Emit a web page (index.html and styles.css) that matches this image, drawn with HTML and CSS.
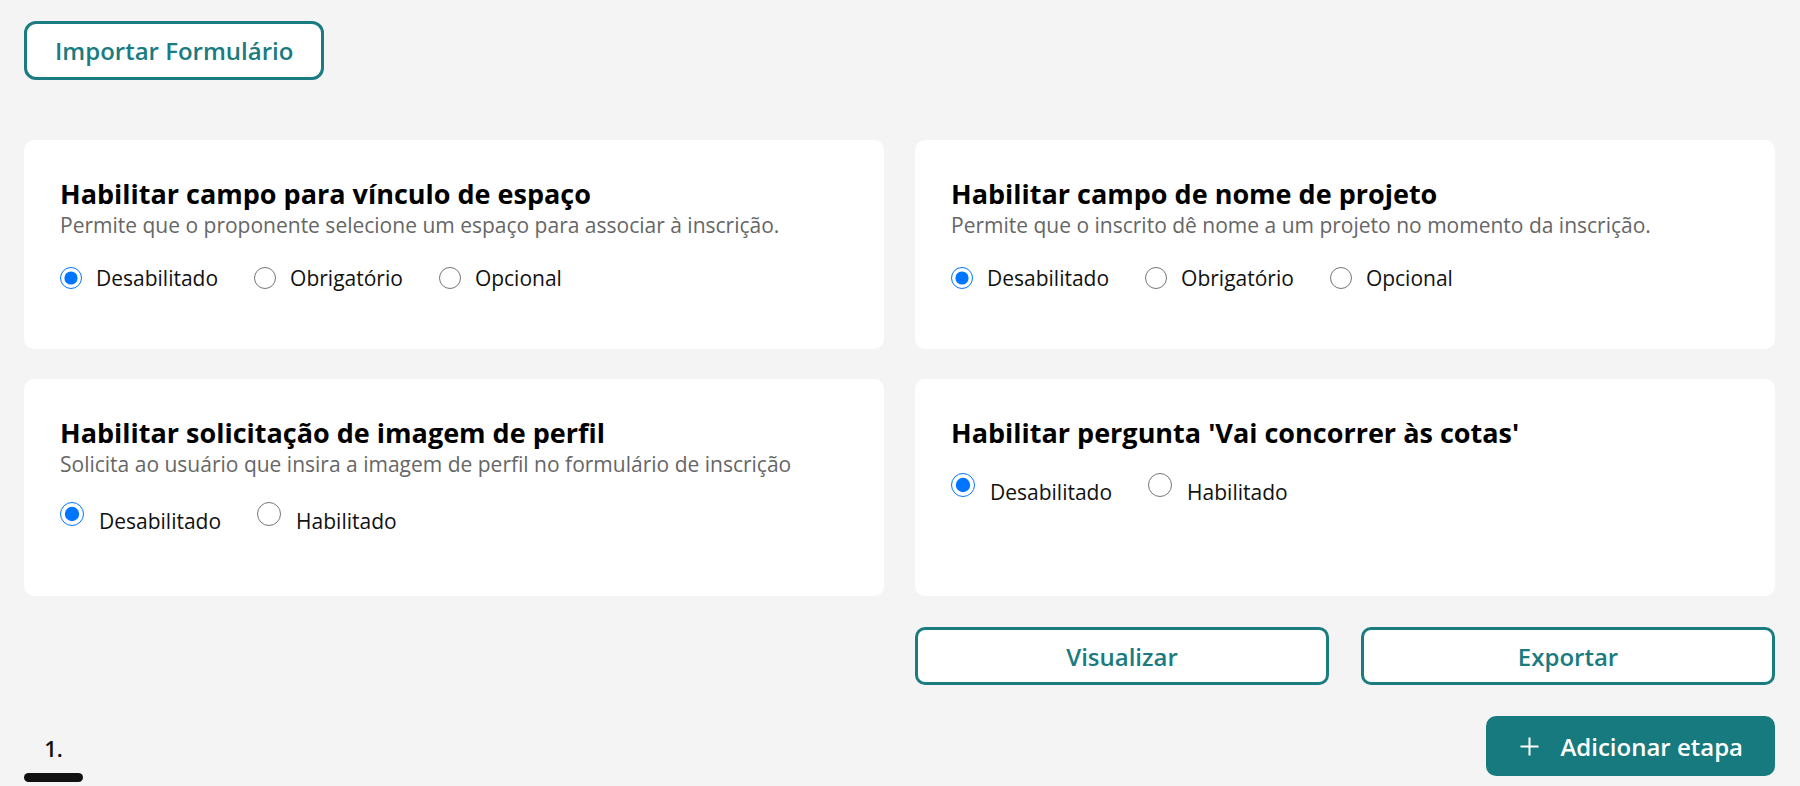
FILE: index.html
```html
<!DOCTYPE html>
<html lang="pt-BR">
<head>
<meta charset="utf-8">
<title>Formulário</title>
<link rel="stylesheet" href="styles.css">
</head>
<body>
<main class="page">
  <div class="toolbar">
    <button class="btn btn-outline btn-import" type="button">Importar Formulário</button>
  </div>

  <section class="grid">
    <div class="card">
      <h3 class="card-title">Habilitar campo para vínculo de espaço</h3>
      <p class="card-desc">Permite que o proponente selecione um espaço para associar à inscrição.</p>
      <div class="options">
        <label class="option"><input class="radio" type="radio" name="espaco" checked><span>Desabilitado</span></label>
        <label class="option"><input class="radio" type="radio" name="espaco"><span>Obrigatório</span></label>
        <label class="option"><input class="radio" type="radio" name="espaco"><span>Opcional</span></label>
      </div>
    </div>

    <div class="card">
      <h3 class="card-title">Habilitar campo de nome de projeto</h3>
      <p class="card-desc">Permite que o inscrito dê nome a um projeto no momento da inscrição.</p>
      <div class="options">
        <label class="option"><input class="radio" type="radio" name="projeto" checked><span>Desabilitado</span></label>
        <label class="option"><input class="radio" type="radio" name="projeto"><span>Obrigatório</span></label>
        <label class="option"><input class="radio" type="radio" name="projeto"><span>Opcional</span></label>
      </div>
    </div>

    <div class="card">
      <h3 class="card-title">Habilitar solicitação de imagem de perfil</h3>
      <p class="card-desc">Solicita ao usuário que insira a imagem de perfil no formulário de inscrição</p>
      <div class="options options-lg">
        <label class="option"><input class="radio" type="radio" name="perfil" checked><span>Desabilitado</span></label>
        <label class="option"><input class="radio" type="radio" name="perfil"><span>Habilitado</span></label>
      </div>
    </div>

    <div class="card">
      <h3 class="card-title">Habilitar pergunta 'Vai concorrer às cotas'</h3>
      <div class="options options-lg options-tight">
        <label class="option"><input class="radio" type="radio" name="cotas" checked><span>Desabilitado</span></label>
        <label class="option"><input class="radio" type="radio" name="cotas"><span>Habilitado</span></label>
      </div>
    </div>
  </section>

  <div class="actions">
    <div></div>
    <div class="actions-buttons">
      <button class="btn btn-outline btn-wide" type="button">Visualizar</button>
      <button class="btn btn-outline btn-wide" type="button">Exportar</button>
    </div>
  </div>

  <div class="footer">
    <div class="tab">
      <span class="tab-label">1.</span>
      <span class="tab-bar"></span>
    </div>
    <button class="btn btn-primary" type="button">
      <svg class="plus" width="19" height="19" viewBox="0 0 19 19" aria-hidden="true"><path d="M9.5 0.5v18M0.5 9.5h18" stroke="#fff" stroke-width="2" fill="none"/></svg>
      <span>Adicionar etapa</span>
    </button>
  </div>
</main>
</body>
</html>
```

FILE: styles.css
```css
* { box-sizing: border-box; }

html, body {
  margin: 0;
  padding: 0;
  background: #f4f4f4;
  font-family: "Open Sans", "Noto Sans", sans-serif;
  color: #111;
}

.page {
  padding: 21px 25px 0 24px;
  height: 786px;
  overflow: hidden;
}

.toolbar {
  display: flex;
}

.btn {
  font-family: "Open Sans", "Noto Sans", sans-serif;
  font-weight: 600;
  font-size: 24px;
  cursor: pointer;
  display: inline-flex;
  align-items: center;
  justify-content: center;
}

.btn-outline {
  background: #fff;
  color: #1a7b80;
  border: 3px solid #1a7b80;
  border-radius: 12px;
}

.btn-import {
  height: 59px;
  padding: 0 28px;
}

.grid {
  margin-top: 60px;
  display: grid;
  grid-template-columns: 1fr 1fr;
  column-gap: 31px;
  row-gap: 30px;
}

.card {
  background: #fff;
  border-radius: 10px;
  padding: 36px 36px 56px;
}

.card-title {
  margin: 0;
  font-size: 27px;
  font-weight: 700;
  line-height: 36px;
  color: #000;
}

.card-desc {
  margin: 0;
  font-size: 21px;
  line-height: 27px;
  color: #666;
}

.options {
  display: flex;
  align-items: center;
  gap: 36px;
  margin-top: 24px;
  height: 30px;
}

.option {
  display: flex;
  align-items: center;
  gap: 14px;
  font-size: 21px;
  line-height: 27px;
  color: #111;
  cursor: pointer;
}

.radio {
  width: 22px;
  height: 22px;
  margin: 0;
  accent-color: #0075ff;
  flex: none;
}

.options-lg {
  height: 38px;
  gap: 36px;
}

.options-lg .option {
  gap: 15px;
}

.options-lg .radio {
  width: 24px;
  height: 24px;
  margin-bottom: 14px;
}

.options-tight {
  margin-top: 22px;
}

.actions {
  margin-top: 31px;
  display: grid;
  grid-template-columns: 1fr 1fr;
  column-gap: 31px;
}

.actions-buttons {
  display: flex;
  gap: 32px;
}

.btn-wide {
  flex: 1;
  height: 58px;
  border-radius: 10px;
}

.footer {
  margin-top: 31px;
  display: flex;
  justify-content: space-between;
  align-items: flex-start;
}

.tab {
  display: flex;
  flex-direction: column;
  align-items: center;
  width: 59px;
  padding-top: 17px;
}

.tab-label {
  font-size: 22px;
  font-weight: 600;
  line-height: 30px;
  color: #111;
}

.tab-bar {
  margin-top: 10px;
  width: 59px;
  height: 9px;
  border-radius: 5px;
  background: #111;
}

.btn-primary {
  height: 60px;
  padding: 0 32px 0 34px;
  gap: 21px;
  background: #167a7f;
  color: #fff;
  border: none;
  border-radius: 10px;
}

.plus {
  display: block;
  flex: none;
}
```
